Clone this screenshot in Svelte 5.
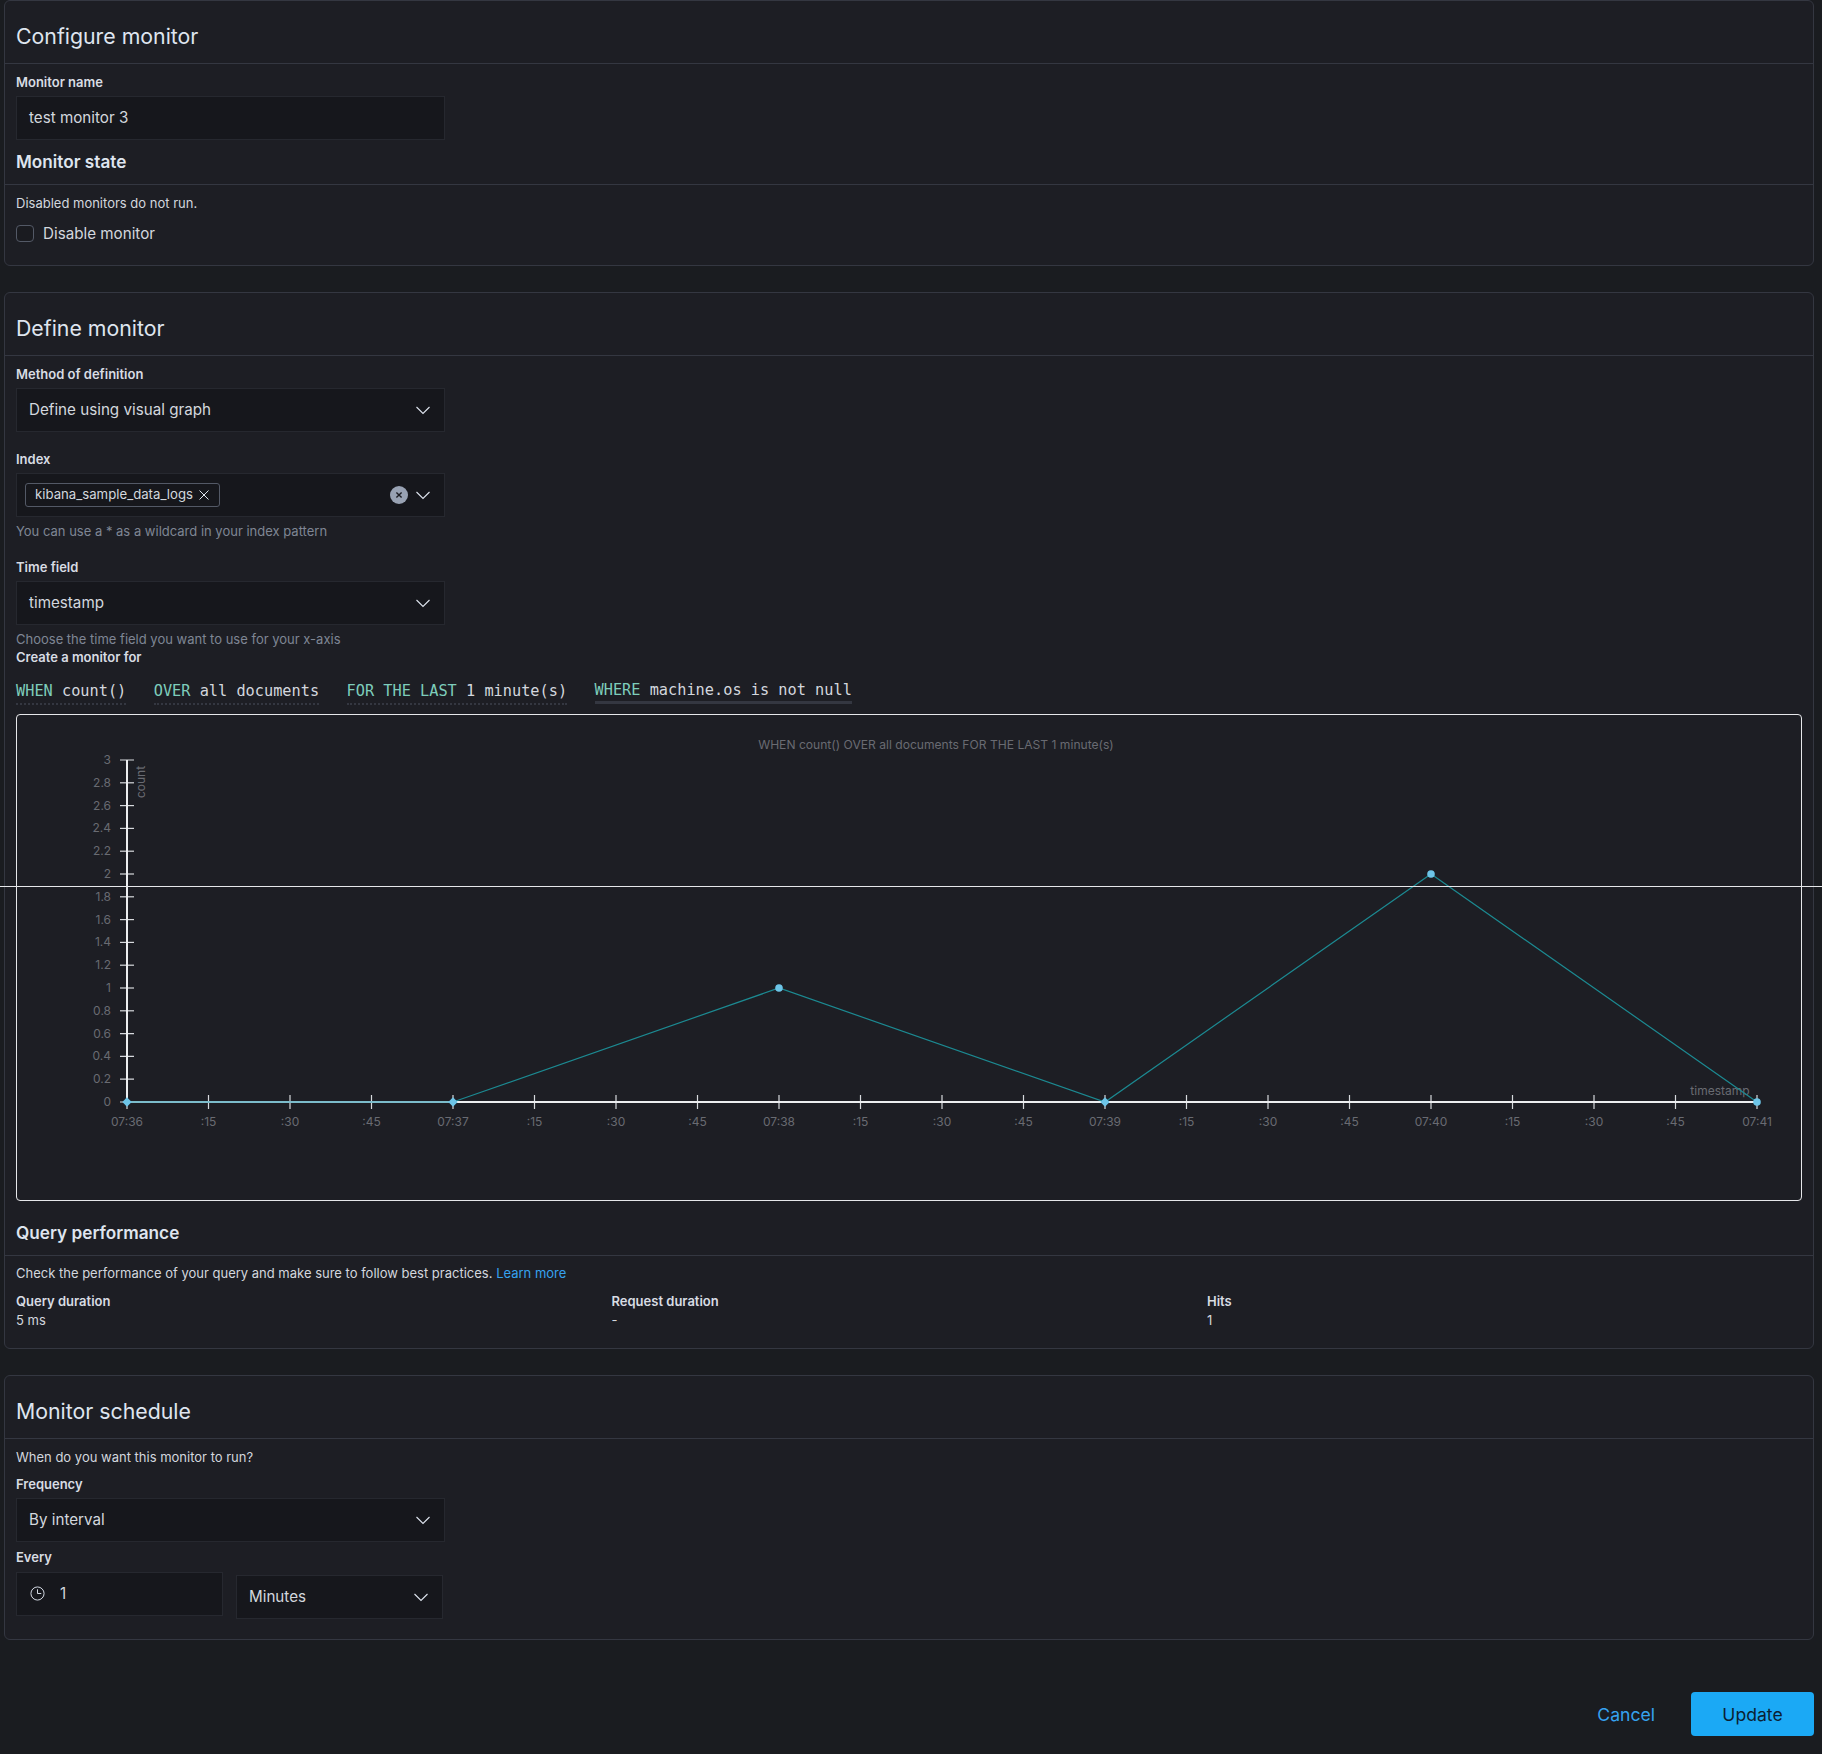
<script>
  const W = 1786, H = 486;
  const ox = 110, y0 = 387, stepX = 81.5, stepY = 22.8;
  const yTicks = ['0','0.2','0.4','0.6','0.8','1','1.2','1.4','1.6','1.8','2','2.2','2.4','2.6','2.8','3'];
  const xLabels = ['07:36',':15',':30',':45','07:37',':15',':30',':45','07:38',':15',':30',':45','07:39',':15',':30',':45','07:40',':15',':30',':45','07:41'];
  const data = [[0,0],[4,0],[8,1],[12,0],[16,2],[20,0]];
  const px = (i) => ox + i * stepX;
  const py = (v) => y0 - v * 5 * stepY;
  const pts = data.map(([i, v]) => `${px(i)},${py(v)}`).join(' ');
</script>

<div class="page">
  <section class="panel first">
    <h2 class="title">Configure monitor</h2>
    <div class="rule"></div>
    <div class="body">
      <div class="label">Monitor name</div>
      <div class="input"><span>test monitor 3</span></div>
      <h3 class="sub state">Monitor state</h3>
      <div class="rule bleed"></div>
      <p class="text state-note">Disabled monitors do not run.</p>
      <div class="check"><span class="box"></span><span>Disable monitor</span></div>
    </div>
  </section>

  <section class="panel second">
    <h2 class="title">Define monitor</h2>
    <div class="rule"></div>
    <div class="body">
      <div class="label">Method of definition</div>
      <div class="input select">
        <span>Define using visual graph</span>
        <svg class="chev" viewBox="0 0 16 16"><path d="M1.5 5l6.5 6.5L14.5 5" /></svg>
      </div>
      <div class="label gap-l">Index</div>
      <div class="input select combo">
        <span class="pill">kibana_sample_data_logs
          <svg class="x" viewBox="0 0 12 12"><path d="M1.5 1.5l9 9M10.5 1.5l-9 9" /></svg>
        </span>
        <span class="icons">
          <svg class="clear" viewBox="0 0 18 18"><circle cx="9" cy="9" r="9" /><path d="M6.4 6.4l5.2 5.2M11.6 6.4l-5.2 5.2" /></svg>
          <svg class="chev" viewBox="0 0 16 16"><path d="M1.5 5l6.5 6.5L14.5 5" /></svg>
        </span>
      </div>
      <p class="help">You can use a * as a wildcard in your index pattern</p>
      <div class="label gap-time">Time field</div>
      <div class="input select">
        <span>timestamp</span>
        <svg class="chev" viewBox="0 0 16 16"><path d="M1.5 5l6.5 6.5L14.5 5" /></svg>
      </div>
      <p class="help">Choose the time field you want to use for your x-axis</p>
      <div class="label create">Create a monitor for</div>
      <div class="exprs">
        <span class="expr e1"><b>WHEN</b> count()</span>
        <span class="expr e2"><b>OVER</b> all documents</span>
        <span class="expr e3"><b>FOR THE LAST</b> 1 minute(s)</span>
        <span class="expr e4 on"><b>WHERE</b> machine.os is not null</span>
      </div>
      <div class="chart">
        <svg viewBox="0 0 {W} {H}" width={W} height={H}>
          <text class="tick title-tick" x="919" y="34" text-anchor="middle">WHEN count() OVER all documents FOR THE LAST 1 minute(s)</text>
          <text class="tick" transform="translate(128 67) rotate(-90)" text-anchor="middle">count</text>
          <text class="tick" x="1703" y="380" text-anchor="middle">timestamp</text>
          {#each yTicks as t, i}
            <line class="ax" x1={ox - 7} x2={ox + 7} y1={y0 - i * stepY} y2={y0 - i * stepY} />
            <text class="tick" x={ox - 16} y={y0 - i * stepY + 4} text-anchor="end">{t}</text>
          {/each}
          {#each xLabels as t, i}
            <line class="ax" x1={px(i)} x2={px(i)} y1={y0 - 7} y2={y0 + 7} />
            <text class="tick" x={px(i)} y={y0 + 24} text-anchor="middle">{t}</text>
          {/each}
          <line class="axis" x1={ox} x2={ox} y1={y0 - 15 * stepY} y2={y0} />
          <line class="axis" x1={ox} x2={px(20)} y1={y0} y2={y0} />
          <polyline class="series" points={pts} />
          <line class="flat" x1={px(0)} x2={px(4)} y1={y0} y2={y0} />
          {#each data as [i, v]}
            {#if v === 0 && i !== 20}
              <rect class="dot" x={px(i) - 3.3} y={py(v) - 3.3} width="6.6" height="6.6" transform="rotate(45 {px(i)} {py(v)})" />
            {:else}
              <circle class="dot" cx={px(i)} cy={py(v)} r="3.8" />
            {/if}
          {/each}
        </svg>
      </div>
      <h3 class="sub query">Query performance</h3>
      <div class="rule bleed"></div>
      <p class="text perf">Check the performance of your query and make sure to follow best practices. <a href="#learn">Learn more</a></p>
      <div class="stats">
        <div><div class="label tight">Query duration</div><div class="val">5 ms</div></div>
        <div><div class="label tight">Request duration</div><div class="val">-</div></div>
        <div><div class="label tight">Hits</div><div class="val">1</div></div>
      </div>
    </div>
  </section>

  <section class="panel third">
    <h2 class="title">Monitor schedule</h2>
    <div class="rule"></div>
    <div class="body">
      <p class="text when">When do you want this monitor to run?</p>
      <div class="label">Frequency</div>
      <div class="input select">
        <span>By interval</span>
        <svg class="chev" viewBox="0 0 16 16"><path d="M1.5 5l6.5 6.5L14.5 5" /></svg>
      </div>
      <div class="label every">Every</div>
      <div class="row">
        <div class="input num">
          <svg class="clock" viewBox="0 0 16 16"><circle cx="8" cy="8" r="7" /><path d="M8 3.5V8h4" /></svg>
          <span>1</span>
        </div>
        <div class="input select unit">
          <span>Minutes</span>
          <svg class="chev" viewBox="0 0 16 16"><path d="M1.5 5l6.5 6.5L14.5 5" /></svg>
        </div>
      </div>
    </div>
  </section>

  <div class="actions">
    <span class="cancel">Cancel</span>
    <span class="update">Update</span>
  </div>
  <div class="crosshair"></div>
</div>

<style>
  :global(body) { margin: 0; background: #1a1c20; }
  * { box-sizing: border-box; }
  .page {
    position: relative;
    width: 1822px;
    height: 1754px;
    padding: 0 8px 0 4px;
    font-family: Inter, "Liberation Sans", sans-serif;
    color: #dfe5ef;
    background: #1a1c20;
    overflow: hidden;
  }
  .panel {
    background: #1d1e24;
    border: 1px solid #343741;
    border-radius: 6px;
  }
  .first { height: 266px; }
  .second { height: 1057px; margin-top: 26px; }
  .third { height: 265px; margin-top: 26px; }
  .title {
    margin: 0;
    height: 62px;
    padding: 9px 11px 0;
    display: flex;
    align-items: center;
    font-size: 21.3px;
    font-weight: 400;
    line-height: 1;
  }
  .rule { height: 1px; background: #343741; }
  .rule.bleed { margin: 0 -11px; }
  .body { padding: 10px 11px 0; }
  .label { font-size: 13px; font-weight: 600; line-height: 17px; height: 16px; margin-bottom: 6px; color: #d8dce3; }
  .label.tight { margin-bottom: 3px; }
  .gap-l { margin-top: 19px; }
  .gap-time { margin-top: 20px; }
  .create { margin-top: 2px; margin-bottom: 0; }
  .input {
    width: 429px;
    height: 44px;
    background: #16171c;
    border: 1px solid #26282f;
    padding: 0 13px 1px 12px;
    display: flex;
    align-items: center;
    font-size: 15.2px;
    color: #d3d7de;
  }
  .select { justify-content: space-between; }
  .chev { width: 16px; height: 16px; fill: none; stroke: #dfe5ef; stroke-width: 1.1; flex: none; }
  .combo { padding-left: 8px; }
  .pill {
    display: inline-flex;
    align-items: center;
    gap: 5px;
    height: 24px;
    padding: 0 9px;
    border: 1px solid #535966;
    border-radius: 3px;
    font-size: 13.2px;
    line-height: 1;
  }
  .x { width: 12px; height: 12px; stroke: #dfe5ef; stroke-width: 1; fill: none; }
  .icons { display: flex; align-items: center; gap: 7px; }
  .clear { width: 18px; height: 18px; }
  .clear circle { fill: #98a2b3; }
  .clear path { stroke: #1d1e24; stroke-width: 1.4; fill: none; }
  .help { margin: 6px 0 0; font-size: 13px; line-height: 16px; color: #7f8694; }
  .sub { margin: 0; font-size: 17.2px; font-weight: 600; line-height: 24px; }
  .state { margin-top: 10px; height: 34px; }
  .text { margin: 0; font-size: 13px; line-height: 16px; color: #d3d7de; }
  .state-note { margin-top: 10px; }
  .check { display: flex; align-items: center; gap: 9px; margin-top: 12px; font-size: 15.2px; height: 20px; color: #d3d7de; }
  .box { width: 18px; height: 17px; border: 1px solid #535966; border-radius: 4px; background: #1a1b20; }
  .exprs { display: flex; height: 44px; padding-top: 15px; font-family: "DejaVu Sans Mono", monospace; font-size: 15.28px; }
  .expr { height: 25px; line-height: 22px; border-bottom: 2px dotted #343741; margin-right: 27.4px; white-space: pre; color: #d3d7de; }
  .expr b { font-weight: 400; color: #7dcdbb; }
  .expr.on { border-bottom: 3px solid #343741; height: 24px; line-height: 21px; }
  .chart {
    width: 1786px;
    height: 487px;
    border: 1px solid #e6e7ea;
    border-radius: 4px;
    overflow: hidden;
    margin-top: 5px;
  }
  .chart svg { display: block; }
  .tick { font-size: 12px; fill: #696b72; font-family: Inter, sans-serif; }
  .title-tick { font-size: 12.1px; }
  .ax { stroke: #d7d9dd; stroke-width: 1.2; }
  .axis { stroke: #eceef0; stroke-width: 2; }
  .flat { stroke: #7cbccb; stroke-width: 2; }
  .series { fill: none; stroke: #1c8a92; stroke-width: 1.2; }
  .dot { fill: #6dc5e8; }
  .query { margin-top: 20px; height: 34px; }
  .perf { margin-top: 9px; }
  .perf a { color: #36a2ef; text-decoration: none; }
  .stats { display: grid; grid-template-columns: repeat(3, 595.5px); margin-top: 12px; }
  .val { font-size: 13px; line-height: 16px; color: #d3d7de; }
  .when { margin-top: 0; margin-bottom: 11px; }
  .every { margin-top: 7px; margin-bottom: 7px; }
  .row { display: flex; gap: 13px; align-items: flex-start; }
  .num { width: 207px; gap: 15px; padding-left: 13px; }
  .unit { width: 207px; margin-top: 3px; }
  .clock { width: 15px; height: 15px; fill: none; stroke: #dfe5ef; stroke-width: 1; flex: none; }
  .actions {
    display: flex;
    justify-content: flex-end;
    align-items: center;
    gap: 36px;
    margin-top: 52px;
    font-size: 17.6px;
  }
  .cancel { color: #36a2ef; }
  .update {
    width: 123px;
    height: 44px;
    display: flex;
    align-items: center;
    justify-content: center;
    border-radius: 4px;
    background: #1ba9f5;
    color: #0b1f33;
  }
  .crosshair { position: absolute; left: 0; right: 0; top: 886px; height: 1px; background: #e6e7ea; }
</style>
